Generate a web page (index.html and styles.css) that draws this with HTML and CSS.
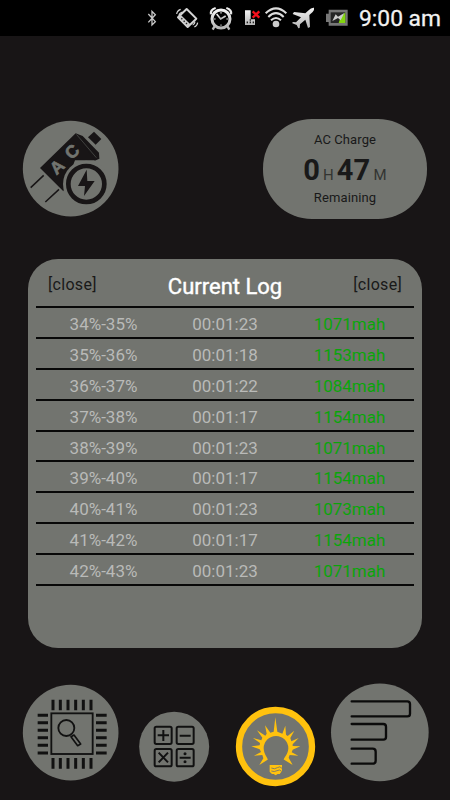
FILE: index.html
```html
<!DOCTYPE html>
<html lang="en">
<head>
<meta charset="utf-8">
<title>Current Log</title>
<link rel="stylesheet" href="styles.css">
</head>
<body>
<header class="status">
  <svg class="status-icons" viewBox="0 0 660 108" aria-hidden="true">
    <defs>
      <linearGradient id="silver" x1="0" y1="0" x2="0" y2="1"><stop offset="0" stop-color="#f4f4f4"/><stop offset="1" stop-color="#b5b5b5"/></linearGradient>
    </defs>
    <path d="M55 42 L76 65 L66 75 V34 L76 44 L55 67" fill="none" stroke="#c8c8c8" stroke-width="4"/>
    <g fill="none" stroke="#d4d4d4">
      <path d="M170 27 L199 56 L173 81 L144 52Z" stroke-width="6" stroke-linejoin="round"/>
      <path d="M144 52 L173 81 L181 73 L152 44Z" fill="#ccc" stroke="none"/>
      <path d="M140 42 q1-10 12-14 M147 46 q1-7 10-10 M188 75 q6-2 7-10 M193 81 q9-4 10-13" stroke-width="3.5"/>
      <path d="M154 55l3 3M161 62l3 3M168 69l3 3" stroke="#222" stroke-width="4"/>
    </g>
    <g fill="none" stroke="url(#silver)">
      <circle cx="273" cy="57" r="27" stroke-width="9"/>
      <path d="M243 43 q-3-14 14-19 M289 24 q17 5 14 19 M253 80l-5 9 M293 80l5 9" stroke-width="7"/>
      <path d="M260 42L272 57L287 48" stroke-width="5"/>
      <path d="M273 36v5M273 73v5M252 57h5M289 57h5" stroke-width="3"/>
    </g>
    <path d="M345 31h17v27h13v17h-30z" fill="url(#silver)"/>
    <path d="M350 67h4M359 67h4M368 67h4M359 60h4" stroke="#222" stroke-width="5"/>
    <path d="M368 34L388 53M388 34L368 53" stroke="#f5101c" stroke-width="7"/>
    <g fill="none" stroke="#ddd" stroke-width="6">
      <path d="M407 40 Q438 10 469 40"/><path d="M415 51 Q438 28 461 51"/><path d="M423 61 Q438 47 453 61"/>
    </g>
    <circle cx="438" cy="72" r="10" fill="#ccc"/>
    <path d="M552 23 q-9-1-16 8 l-10 9 -34-4 -4 6 25 10 -15 15 -10-1 -1 4 13 5 5 10 4-1 1-11 16-14 8 25 6-3 -2-36 10-9 q6-7 4-13z" fill="url(#silver)"/>
    <path d="M596 29h57v48h-57v-11h-8v-25h8z" fill="#777"/>
    <rect x="602" y="37" width="44" height="32" fill="#252525"/>
    <path d="M631 53l15-16v32h-20z" fill="#83d510"/>
    <path d="M607 63 L617 43 L624 50 L643 39 L632 61 L624 54Z" fill="#ccc"/>
  </svg>
  <span class="clock">9:00 am</span>
</header>

<section class="summary">
  <svg class="icon-lg" viewBox="0 0 330 330" aria-label="AC charger">
    <circle class="disc" cx="167" cy="161" r="143.5"/>
    <path class="ink" d="M182 55 L253 130 L236 136 L180 136 L145 229 L75 159Z"/>
    <path class="ink" d="M182 55 L203 63 L252 113 L253 131 L239 137Z"/>
    <path class="ink" d="M237 50 L259 72 L242 89 L219 67Z"/>
    <path d="M185 59 L244 128" stroke="#555753" stroke-width="2"/>
    <path d="M86 181L47 218M132 223L91 261" stroke="#181516" stroke-width="4.5"/>
    <circle class="disc" cx="214" cy="207" r="70"/>
    <circle cx="214" cy="207" r="54" fill="none" stroke="#181516" stroke-width="14"/>
    <path class="ink" d="M215 164 L189 213 H210 L207 243 L239 198 H217Z"/>
    <text class="ac" transform="translate(138 169) rotate(-43)">A</text>
    <text class="ac" transform="translate(183 123) rotate(-43)">C</text>
  </svg>
  <div class="remaining">
    <span class="caption">AC Charge</span>
    <div class="time"><b class="hours">0</b><span class="unit-h">H</span><b class="minutes">47</b><span class="unit-m">M</span></div>
    <span class="caption caption-end">Remaining</span>
  </div>
</section>

<main class="log">
  <div class="log-head"><span class="close">[close]</span><h1>Current Log</h1><span class="close">[close]</span></div>
  <div class="row"><span>34%-35%</span><span>00:01:23</span><span class="mah">1071mah</span></div>
  <div class="row"><span>35%-36%</span><span>00:01:18</span><span class="mah">1153mah</span></div>
  <div class="row"><span>36%-37%</span><span>00:01:22</span><span class="mah">1084mah</span></div>
  <div class="row"><span>37%-38%</span><span>00:01:17</span><span class="mah">1154mah</span></div>
  <div class="row"><span>38%-39%</span><span>00:01:23</span><span class="mah">1071mah</span></div>
  <div class="row"><span>39%-40%</span><span>00:01:17</span><span class="mah">1154mah</span></div>
  <div class="row"><span>40%-41%</span><span>00:01:23</span><span class="mah">1073mah</span></div>
  <div class="row"><span>41%-42%</span><span>00:01:17</span><span class="mah">1154mah</span></div>
  <div class="row"><span>42%-43%</span><span>00:01:23</span><span class="mah">1071mah</span></div>
</main>

<nav class="tools">
  <svg class="icon-lg" viewBox="0 0 330 330" aria-label="Processor">
    <circle class="disc" cx="167" cy="158" r="143.5"/>
    <g fill="none" stroke="#111">
      <rect x="109" y="100" width="124" height="122" stroke-width="5.5"/>
      <path d="M114 59v32M136 59v32M159 59v32M182 59v32M205 59v32M228 59v32M114 234v32M136 234v32M159 234v32M182 234v32M205 234v32M228 234v32M68 106h31M68 128h31M68 151h31M68 173h31M68 196h31M68 219h31M243 106h32M243 128h32M243 151h32M243 173h32M243 196h32M243 219h32" stroke-width="9"/>
      <circle cx="154" cy="144" r="24" stroke-width="5.5"/>
      <path d="M168 170L177 165L197 192L188 197Z" stroke-width="5" stroke-linejoin="round"/>
    </g>
  </svg>
  <svg class="icon-sm" viewBox="0 0 270 270" aria-label="Calculator">
    <circle class="disc" cx="132.500" cy="140" r="105"/>
    <g fill="none" stroke="#111" stroke-width="6">
      <rect x="74" y="80" width="51" height="52" rx="5"/><rect x="140" y="80" width="51" height="52" rx="5"/>
      <rect x="74" y="147" width="51" height="52" rx="5"/><rect x="140" y="147" width="51" height="52" rx="5"/>
      <path d="M83 106h34M100 90v33M149 107h33M149 173h33M86 158L114 187M114 158L86 187"/>
    </g>
    <circle cx="165" cy="161" r="4.500" fill="#111"/><circle cx="165" cy="185" r="4.500" fill="#111"/>
  </svg>
  <svg class="icon-sm icon-bulb" viewBox="0 0 270 270" aria-label="Light">
    <circle cx="136.500" cy="139.500" r="109.500" fill="#72746f" stroke="#ffc20e" stroke-width="19"/>
    <path d="M136 52 L142 95 L157 101 L166 77 L168 104 L173 108 L193 92 L181 114 L184 124 L206 114 L188 133 L188 138 L211 139 L188 149 L185 157 L205 167 L179 165 L176 173 L188 195 L160 178 L115 178 L88 195 L100 175 L97 165 L72 167 L93 156 L89 148 L64 139 L89 136 L90 129 L69 114 L94 121 L97 113 L81 91 L106 107 L110 101 L105 76 L121 98 L131 95Z" fill="#ffc20e"/>
    <path class="disc" d="M117 192 C117 176 101 165 101 145 A37 37 0 0 1 175 145 C175 165 157 176 157 192Z"/>
    <path d="M119 195H156V213L149 222H143L137 226L131 222H126L119 215Z" fill="#ffc20e"/>
    <path d="M124 204q10 5 18-1t14 2M124 213q9 4 17-1t14 2" fill="none" stroke="#72746f" stroke-width="2.500"/>
  </svg>
  <svg class="icon-lg icon-graph" viewBox="0 0 330 330" aria-label="Bars">
    <circle class="disc" cx="164.500" cy="157" r="146.500"/>
    <g fill="none" stroke="#0b0b0b" stroke-width="7" stroke-linecap="round">
      <path d="M80 64H247Q255 64 255 72V101Q255 109 247 109H80"/>
      <path d="M80 132H175Q183 132 183 140V171Q183 179 175 179H80"/>
      <path d="M80 206H143Q152 206 152 215V242Q152 251 143 251H80"/>
    </g>
  </svg>
</nav>
</body>
</html>
```
FILE: styles.css
```css
* { box-sizing: border-box; }
body {
  margin: 0;
  width: 450px;
  height: 800px;
  overflow: hidden;
  display: flex;
  flex-direction: column;
  background: #181516;
  color: #191919;
  font-family: Roboto, "Liberation Sans", sans-serif;
}
.disc { fill: #72746f; }
.ink { fill: #181516; }

.status {
  display: flex;
  height: 36px;
  padding-left: 130px;
  background: #000;
}
.status-icons { width: 220px; height: 36px; flex: none; }
.clock {
  margin-left: 9px;
  line-height: 38px;
  font-size: 22.8px;
  color: #f2f2f2;
  -webkit-text-stroke: .3px #f2f2f2;
  white-space: nowrap;
}

.summary {
  display: flex;
  align-items: flex-start;
  height: 223px;
  padding: 79px 0 0 15px;
}
.icon-lg { width: 110px; height: 110px; flex: none; }
.ac {
  font: bold 52px "Liberation Sans", sans-serif;
  text-anchor: middle;
  fill: #72746f;
  stroke: #72746f;
  stroke-width: 2px;
}
.remaining {
  display: flex;
  flex-direction: column;
  align-items: center;
  width: 164px;
  height: 100px;
  margin: 4px 0 0 138px;
  padding-top: 13px;
  border-radius: 49px;
  background: #72746f;
}
.caption { font-size: 13px; line-height: 16px; letter-spacing: .1px; }
.caption-end { margin-top: 6px; }
.time {
  display: flex;
  align-items: baseline;
  height: 36px;
  line-height: 44px;
  font-size: 29px;
}
.minutes { letter-spacing: .3px; }
.unit-h, .unit-m { font-size: 15px; color: #333432; }
.unit-h { margin: 0 3px 0 3px; }
.unit-m { margin-left: 3px; }

.log {
  width: 394px;
  height: 389px;
  margin-left: 28px;
  padding: 0 8px;
  border-radius: 30px;
  background: #72746f;
}
.log-head {
  display: flex;
  justify-content: space-between;
  height: 49px;
  padding: 15px 12px 0;
  border-bottom: 2px solid #080808;
}
.log-head h1 {
  margin: 1px 0 0;
  font-size: 22px;
  line-height: 24px;
  font-weight: 400;
  color: #fff;
  -webkit-text-stroke: .4px #fff;
}
.close { font-size: 16px; line-height: 21px; letter-spacing: .3px; }
.row {
  display: grid;
  grid-template-columns: 135px 108px 141px;
  height: 30.9px;
  border-bottom: 2px solid #080808;
  font-size: 17px;
  line-height: 33px;
  color: #b9bab8;
  text-align: center;
}
.row .mah { color: #0aa50a; }

.tools {
  display: flex;
  align-items: flex-start;
  height: 120px;
  margin-top: 32px;
  padding-left: 15px;
}
.icon-sm { width: 90px; height: 90px; flex: none; margin: 20px 0 0 5px; }
.icon-bulb { margin-left: 10px; }
.icon-graph { margin-left: 5px; }
```
